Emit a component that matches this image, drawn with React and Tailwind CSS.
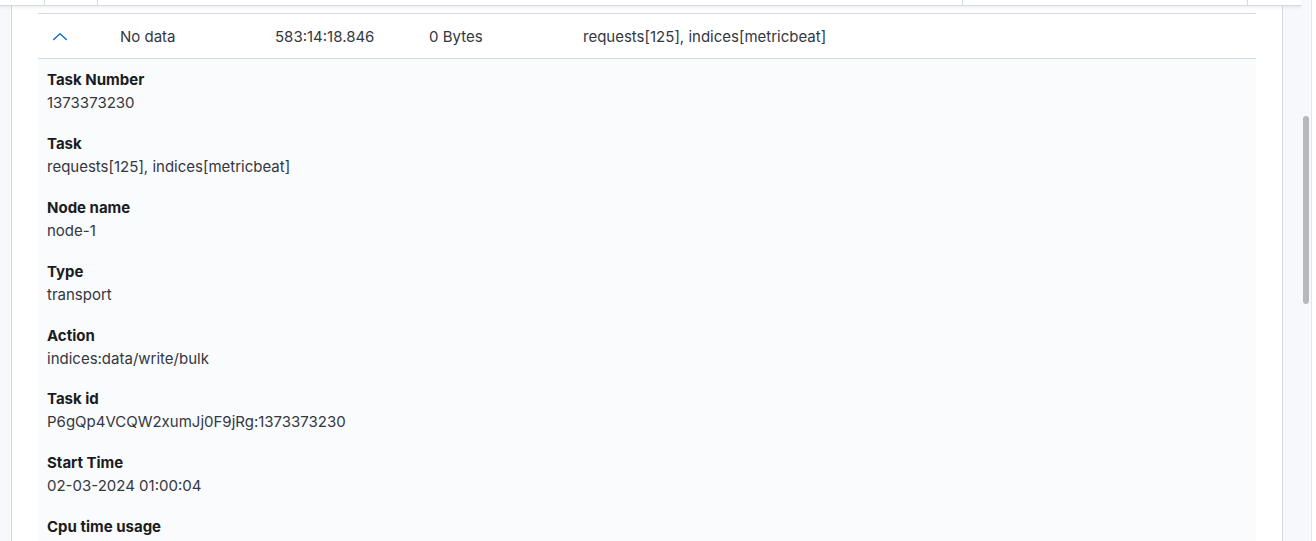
import React from "react";

const details = [
  ["Task Number", "1373373230"],
  ["Task", "requests[125], indices[metricbeat]"],
  ["Node name", "node-1"],
  ["Type", "transport"],
  ["Action", "indices:data/write/bulk"],
  ["Task id", "P6gQp4VCQW2xumJj0F9jRg:1373373230"],
  ["Start Time", "02-03-2024 01:00:04"],
  ["Cpu time usage", "—"],
];

export default function App() {
  return (
    <div
      className="relative w-[1316px] h-[541px] overflow-hidden bg-[#f7f8fc] text-[15px] text-[#343741]"
      style={{ fontFamily: "Inter, 'Noto Sans', sans-serif" }}
    >
      {/* sticky header sliver */}
      <div className="absolute left-0 top-0 z-10 flex h-[6px] w-[1301px] border-b border-[#d3dae6] bg-white shadow-[0_2px_3px_rgba(0,0,0,0.06)]">
        <div className="w-[45px] border-r border-[#d3dae6]" />
        <div className="w-[53px] border-r border-[#d3dae6]" />
        <div className="w-[865px] border-r border-[#d3dae6]" />
        <div className="w-[285px] border-r border-[#d3dae6]" />
        <div className="flex-1" />
      </div>

      <div className="flex h-full">
        <div className="w-[11px] shrink-0" />
        <div className="flex w-[1272px] shrink-0 flex-col border-x border-[#d3dae6] bg-white px-[26px] pt-[13px]">
          {/* row */}
          <div className="flex h-[46px] shrink-0 items-center border-y border-[#d3dae6] pt-[3px]">
            <div className="mt-[-2px] flex w-[82px] shrink-0 items-center pl-[14px]">
              <svg width="16" height="16" viewBox="0 0 16 16" fill="none">
                <path
                  d="M1.6 10.6 L8 4.8 L14.4 10.6"
                  stroke="#0b64dd"
                  strokeWidth="1.3"
                  strokeLinecap="round"
                  strokeLinejoin="round"
                />
              </svg>
            </div>
            <div className="w-[155px] shrink-0">No data</div>
            <div className="w-[154px] shrink-0">583:14:18.846</div>
            <div className="w-[154px] shrink-0">0 Bytes</div>
            <div className="flex-1">requests[125], indices[metricbeat]</div>
          </div>
          {/* expanded */}
          <div className="flex flex-1 flex-col gap-[17.9px] bg-[#fafbfd] pl-[9px] pt-[9px]">
            {details.map(([k, v]) => (
              <div key={k} className="flex flex-col leading-[23px]">
                <div className="font-bold text-[#1a1c21]">{k}</div>
                <div>{v}</div>
              </div>
            ))}
          </div>
        </div>
        <div className="w-[29px] shrink-0 border-r border-[#e3e5ea] pl-[20px] pt-[116px]">
          <div className="h-[188px] w-[6px] rounded-full bg-[#b5b8bd]" />
        </div>
        <div className="flex-1 bg-white" />
      </div>
    </div>
  );
}
